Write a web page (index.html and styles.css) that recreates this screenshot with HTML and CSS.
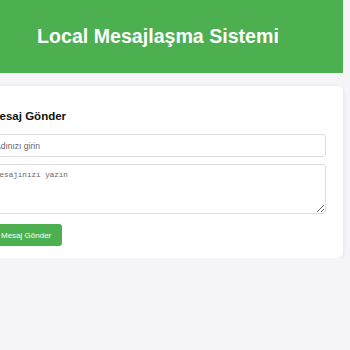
FILE: index.html
```html
<!DOCTYPE html>
<html lang="tr">
<head>
  <meta charset="UTF-8">
  <meta name="viewport" content="width=device-width, initial-scale=1.0">
  <title>Local Mesajlaşma Sistemi</title>
  <link rel="stylesheet" href="styles.css">
</head>
<body>
  <div class="page">
    <header class="site-header">
      <h1>Local Mesajlaşma Sistemi</h1>
    </header>

    <div class="card">
      <h3>Mesaj Gönder</h3>
      <form class="msg-form">
        <input type="text" class="field" placeholder="Adınızı girin">
        <textarea class="field field-area" placeholder="Mesajınızı yazın"></textarea>
        <button type="button" class="btn-send">Mesaj Gönder</button>
      </form>
    </div>
  </div>
</body>
</html>
```

FILE: styles.css
```css
body {
  margin: 0;
  background: #f4f4f9;
  font-family: "Liberation Sans", Arial, sans-serif;
  overflow: hidden;
}

.page {
  width: 370px;
  margin-left: -27px;
}

.site-header {
  display: flex;
  align-items: center;
  justify-content: center;
  height: 73px;
  background: #4caf50;
}
.site-header h1 {
  margin: 0;
  font-size: 19.6px;
  color: #fff;
}

.card {
  margin-top: 13px;
  padding: 23px 17px 12px;
  background: #fff;
  border-radius: 5px;
  box-shadow: 0 1px 4px rgba(0,0,0,0.1);
}
.card h3 {
  margin: 0 0 11px;
  font-size: 11.5px;
  line-height: 14px;
  color: #111;
}

.msg-form {
  display: flex;
  flex-direction: column;
}
.msg-form .field {
  box-sizing: border-box;
  height: 23px;
  padding: 0 4px;
  border: 1px solid #ddd;
  border-radius: 3px;
  font-family: "Liberation Sans", Arial, sans-serif;
  font-size: 8.5px;
}
.msg-form .field::placeholder {
  color: #666;
}
.msg-form .field-area {
  height: 50px;
  margin-top: 7px;
  padding: 6px 4px;
  font-family: "Liberation Mono", monospace;
  font-size: 7.6px;
  resize: vertical;
}
.msg-form .btn-send {
  align-self: flex-start;
  height: 22px;
  margin-top: 10px;
  padding: 0 11px;
  border: none;
  border-radius: 3px;
  background: #4caf50;
  color: #fff;
  font-family: "Liberation Sans", Arial, sans-serif;
  font-size: 8px;
}
```
